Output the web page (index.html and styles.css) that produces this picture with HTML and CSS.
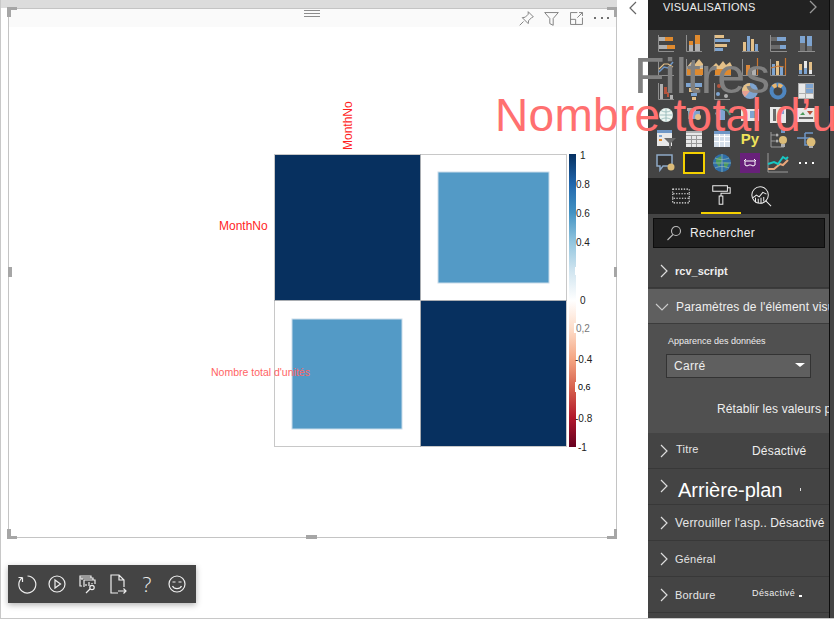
FILE: index.html
```html
<!DOCTYPE html>
<html lang="en">
<head>
    <meta charset="UTF-8">
    <meta name="viewport" content="width=device-width, initial-scale=1.0">
    <title>Rapport</title>
    <link rel="stylesheet" href="styles.css">
</head>
<body>
    <div class="page">
        <div class="report">
            <div class="top-band"></div>
            <div class="visual">
                <i class="grip"><b></b><b></b><b></b></i>
                <i class="corner tl"></i><i class="corner tr"></i><i class="corner bl"></i><i class="corner br"></i>
                <i class="handle left"></i><i class="handle right"></i><i class="handle bottom"></i>
                <div class="visual-header">
                    <svg class="hd-icon" viewBox="0 0 20 20"><path d="M12 2l6 6-2 1-3.500 3.500-.5 3.500-7-7 3.500-.5L12 5zM6.500 13.500L2 18"/></svg>
                    <svg class="hd-icon" viewBox="0 0 20 20"><path d="M2 3h16l-6 7v8l-4-2v-6z"/></svg>
                    <svg class="hd-icon" viewBox="0 0 20 20"><path d="M11 3H3v14h14V9M3 11h6v6M11 9l6-6M13 3h4v4"/></svg>
                    <span class="hd-more"><b></b><b></b><b></b></span>
                </div>
                <svg class="chart" viewBox="9 27 607 510">
                    <defs>
                        <linearGradient id="rdbu" x1="0" y1="0" x2="0" y2="1">
                            <stop offset="0" stop-color="#053061"/>
                            <stop offset="0.1" stop-color="#2166ac"/>
                            <stop offset="0.2" stop-color="#4393c3"/>
                            <stop offset="0.3" stop-color="#92c5de"/>
                            <stop offset="0.4" stop-color="#d1e5f0"/>
                            <stop offset="0.5" stop-color="#ffffff"/>
                            <stop offset="0.6" stop-color="#fddbc7"/>
                            <stop offset="0.7" stop-color="#f4a582"/>
                            <stop offset="0.8" stop-color="#d6604d"/>
                            <stop offset="0.9" stop-color="#b2182b"/>
                            <stop offset="1" stop-color="#67001f"/>
                        </linearGradient>
                    </defs>
                    <rect class="cell-dark" x="274" y="154" width="146.500" height="146.500"/>
                    <rect class="cell-dark" x="420.500" y="300.500" width="146" height="146"/>
                    <rect class="cell-box" x="274.500" y="154.500" width="292" height="292"/>
                    <path class="cell-line" d="M420.500 154v293M274 300.500h293"/>
                    <rect class="cell-mid" x="438" y="172" width="111" height="111"/>
                    <rect class="cell-mid" x="292" y="319" width="110" height="110"/>
                    <text class="lbl-red" transform="translate(352 150) rotate(-90)">MonthNo</text>
                    <text class="lbl-red" x="219" y="230">MonthNo</text>
                    <text class="lbl-pink" x="211" y="376">Nombre total d'unités</text>
                    <rect x="569" y="154" width="7" height="293" fill="url(#rdbu)"/>
                    <text class="tick" x="580" y="159">1</text>
                    <text class="tick" x="576" y="188">0.8</text>
                    <text class="tick" x="576" y="217">0.6</text>
                    <text class="tick" x="576" y="246">0.4</text>
                    <rect class="tick-mask" x="575" y="267" width="4" height="8"/>
                    <text class="tick" x="580" y="304">0</text>
                    <rect class="tick-mask" x="574" y="323" width="14" height="10"/>
                    <text class="tick-faint" x="576" y="332">0,2</text>
                    <text class="tick" x="575" y="363">-0.4</text>
                    <rect class="tick-mask" x="575" y="382" width="14" height="10"/>
                    <text class="tick-small" x="578" y="390">0,6</text>
                    <text class="tick" x="575" y="422">-0.8</text>
                    <text class="tick" x="578" y="451">-1</text>
                </svg>
            </div>
            <div class="toolbar">
                <svg class="tb-icon" viewBox="0 0 24 24"><path d="M7.500 5.500a8.500 8.500 0 1 0 5-1.500M7.500 5.500V10M7.500 5.500H3.500"/></svg>
                <svg class="tb-icon" viewBox="0 0 24 24"><circle cx="12" cy="12" r="8"/><path d="M10 8l5.500 4-5.500 4z"/></svg>
                <svg class="tb-icon" viewBox="0 0 24 24"><path d="M5 6V4h11v2M7 8V6h11v2M5 6h2M7 14H5V6M9 15V8h11v4M11 14v-2M14 14v-4M17 12v-1M15 17l-4 4"/><circle cx="17" cy="15.500" r="2.200"/></svg>
                <svg class="tb-icon" viewBox="0 0 24 24"><path d="M13 21H6V3h8l5 5v7M14 3v5h5M13 19h8M18.500 16.500l2.500 2.500-2.500 2.500"/></svg>
                <span class="tb-help">?</span>
                <svg class="tb-icon" viewBox="0 0 24 24"><circle cx="12" cy="12" r="8"/><path d="M7.500 14c1.500 3.500 7.500 3.500 9 0M7.500 10h3M13.500 10h3"/></svg>
            </div>
        </div>

        <div class="collapse-strip"><svg class="chev-back" viewBox="0 0 10 14"><path d="M8 1L2 7l6 6"/></svg></div>

        <div class="pane">
            <div class="pane-inner">
                <div class="pane-title">
                    <span>VISUALISATIONS</span>
                    <svg class="chev-title" viewBox="0 0 10 14"><path d="M2 1l6 6-6 6"/></svg>
                </div>
                <div class="viz-grid">
                    <svg viewBox="0 0 24 24"><path class="ax" d="M4.500 4v16.500H20"/><rect class="g" x="5" y="6" width="6" height="4"/><rect class="o" x="11" y="6" width="8" height="4"/><rect class="g" x="5" y="14" width="8" height="4"/><rect class="o" x="13" y="14" width="8" height="4"/></svg>
                    <svg viewBox="0 0 24 24"><path class="ax" d="M4.500 4v16.500H20"/><rect class="o" x="7" y="10" width="4" height="4"/><rect class="g" x="7" y="14" width="4" height="6"/><rect class="o" x="13" y="4" width="5" height="9"/><rect class="g" x="13" y="13" width="5" height="7"/></svg>
                    <svg viewBox="0 0 24 24"><path class="ax" d="M4.500 4v16.500"/><rect class="t" x="5" y="4" width="9" height="3"/><rect class="b" x="5" y="8" width="15" height="3"/><rect class="t" x="5" y="13" width="12" height="3"/><rect class="b" x="5" y="17" width="8" height="3"/></svg>
                    <svg viewBox="0 0 24 24"><path class="ax" d="M4 20.500h17"/><rect class="t" x="5" y="11" width="3" height="9"/><rect class="b" x="9" y="5" width="3" height="15"/><rect class="t" x="13" y="8" width="3" height="12"/><rect class="b" x="17" y="13" width="3" height="7"/></svg>
                    <svg viewBox="0 0 24 24"><path class="ax" d="M4.500 4v16.500H21"/><rect class="d" x="5" y="6" width="6" height="4"/><rect class="b" x="11" y="6" width="9" height="4"/><rect class="d" x="5" y="14" width="9" height="4"/><rect class="b" x="14" y="14" width="6" height="4"/></svg>
                    <svg viewBox="0 0 24 24"><path class="ax" d="M4 20.500h17"/><rect class="b" x="6" y="5" width="5" height="7"/><rect class="d" x="6" y="12" width="5" height="8"/><rect class="b" x="13" y="5" width="5" height="10"/><rect class="d" x="13" y="15" width="5" height="5"/></svg>

                    <svg viewBox="0 0 24 24"><path class="ax" d="M4.500 4v16.500H20"/><path class="ln-b" d="M5 17l5-5 4 1 5-6"/><path class="ln-t" d="M5 14l5-5 4 0 5 3"/></svg>
                    <svg viewBox="0 0 24 24"><path class="ax" d="M4.500 4v16.500H20"/><rect class="o" x="5" y="12" width="16" height="8"/><path class="t" d="M5 12l4-5 4 2 4-5 4 5v5H5z"/><path class="g" d="M5 12l4-3 5 3 7-2v3H5z"/></svg>
                    <svg viewBox="0 0 24 24"><path class="ax" d="M4.500 20.500H21"/><rect class="o" x="5" y="13" width="16" height="7"/><path class="t" d="M2 12l4-4 3 3 4-5 3 4 4-3 2 4v3H2z"/></svg>
                    <svg viewBox="0 0 24 24"><path class="ax" d="M4.500 4v16.500H20"/><rect class="o2" x="8" y="10" width="4" height="10"/><rect class="g" x="14" y="13" width="4" height="7"/><path class="ln-o" d="M19.500 3v17"/></svg>
                    <svg viewBox="0 0 24 24"><path class="ax" d="M4.500 4v16.500H20"/><rect class="b" x="6" y="9" width="3" height="11"/><rect class="t" x="10" y="6" width="3" height="14"/><rect class="b" x="14" y="11" width="3" height="9"/><path class="ln-o" d="M5 13l7-2 6 1M19.500 3v17"/></svg>
                    <svg viewBox="0 0 24 24"><path class="ax" d="M4 20.500h17"/><rect class="t" x="5" y="9" width="3" height="6"/><rect class="b" x="5" y="15" width="3" height="4"/><rect class="w" x="10" y="6" width="3" height="7"/><rect class="b" x="10" y="13" width="3" height="6"/><rect class="t" x="15" y="7" width="3" height="8"/><rect class="w" x="15" y="15" width="3" height="4"/></svg>

                    <svg viewBox="0 0 24 24"><path class="ax" d="M4.500 4v16.500H20"/><rect class="g" x="6" y="5" width="3" height="15"/><rect class="r" x="10" y="8" width="3" height="7"/><rect class="r" x="13" y="13" width="2" height="5"/><rect class="g" x="16" y="16" width="3" height="4"/></svg>
                    <svg viewBox="0 0 24 24"><rect class="b" x="4" y="4" width="16" height="4"/><rect class="t" x="7" y="9" width="10" height="4"/><rect class="b" x="9" y="14" width="6" height="3"/><rect class="t" x="10" y="18" width="4" height="3"/></svg>
                    <svg viewBox="0 0 24 24"><path class="ax" d="M4.500 4v16.500H20"/><circle class="r" cx="9" cy="7" r="2"/><circle class="t" cx="15" cy="10" r="1.500"/><circle class="b" cx="8" cy="15" r="2"/><circle class="g" cx="16" cy="17" r="2"/></svg>
                    <svg viewBox="0 0 24 24"><circle class="b" cx="12" cy="12" r="8"/><path class="t" d="M12 12V4a8 8 0 0 0-8 8z"/><path class="p" d="M12 12H4a8 8 0 0 0 3 6z"/></svg>
                    <svg viewBox="0 0 24 24"><circle class="ring-b" cx="12" cy="12" r="6.500"/><path class="ring-t" d="M7 8a6.500 6.500 0 0 1 9 0"/></svg>
                    <svg viewBox="0 0 24 24"><rect class="g" x="4" y="4" width="16" height="16"/><rect class="w" x="5" y="5" width="6" height="9"/><rect class="b" x="12" y="5" width="7" height="4"/><rect class="b" x="12" y="10" width="7" height="4"/><rect class="w" x="5" y="15" width="6" height="4"/><rect class="w" x="12" y="15" width="7" height="4"/></svg>

                    <svg viewBox="0 0 24 24"><circle class="globe-w" cx="12" cy="12" r="7"/><path class="globe-l" d="M5 12h14M12 5v14M7 7.500c3 2 7 2 10 0M7 16.500c3-2 7-2 10 0"/></svg>
                    <svg viewBox="0 0 24 24"><path class="g" d="M5 5h9v3H5z"/><path class="b" d="M6 8h12v8H6z"/><circle class="t" cx="16" cy="14" r="3"/></svg>
                    <svg viewBox="0 0 24 24"><path class="b" d="M5 10l6-4 4 2v9H8z"/><path class="ln-gr" d="M12 6c4 0 7 2 8 6"/></svg>
                    <svg viewBox="0 0 24 24"><rect class="w" x="3" y="6" width="18" height="12"/><rect class="b" x="12" y="8" width="5" height="7"/></svg>
                    <svg viewBox="0 0 24 24"><rect class="w" x="4" y="4" width="16" height="16"/><rect class="d" x="7" y="6" width="3" height="12"/><rect class="b" x="13" y="6" width="5" height="5"/></svg>
                    <svg viewBox="0 0 24 24"><rect class="w" x="3" y="5" width="18" height="14"/><path class="r" d="M13 8h6l-3 4z"/><path class="gr" d="M6 12l3-3 2 3z"/><rect class="d" x="5" y="14" width="14" height="2"/></svg>

                    <svg viewBox="0 0 24 24"><rect class="w" x="3" y="3" width="15" height="16"/><rect class="hd-b" x="3" y="3" width="15" height="3"/><rect class="b" x="5" y="8" width="3" height="2"/><rect class="o" x="5" y="12" width="3" height="2"/><path class="d" d="M10 11h12l-5 5v6l-2-1v-5z"/></svg>
                    <svg viewBox="0 0 24 24"><rect class="w" x="4" y="4" width="16" height="16"/><path class="grid-l" d="M4 8.500h16M4 12.500h16M4 16.500h16M9.500 8v12M14.500 8v12"/><rect class="g" x="4" y="4" width="16" height="2"/></svg>
                    <svg viewBox="0 0 24 24"><rect class="mx" x="4" y="4" width="16" height="16"/><rect class="hd-b" x="4" y="4" width="16" height="3"/><path class="grid-w" d="M4 9.500h16M4 14.500h16M9.500 7v13M14.500 7v13"/></svg>
                    <span class="py-icon">Py</span>
                    <svg viewBox="0 0 24 24"><path class="ln-g" d="M5 5v15h13M5 8h4M5 14h4"/><circle class="g" cx="11" cy="8" r="1.500"/><circle class="g" cx="11" cy="14" r="1.500"/><rect class="hd-b" x="15" y="3" width="4" height="3"/><circle class="bulb" cx="17" cy="13" r="4"/><rect class="g" x="15" y="17" width="4" height="3"/></svg>
                    <svg viewBox="0 0 24 24"><path class="ln-b" d="M3 11h8M11 6h8M11 11h5M11 6v12h3"/><circle class="bulb" cx="17" cy="15" r="4.500"/><rect class="g" x="15" y="19" width="4" height="2"/></svg>

                    <svg viewBox="0 0 24 24"><path class="bubble" d="M3 4h15v11H9l-3 4v-4H3z"/><circle class="bulb" cx="17" cy="16" r="3.500"/></svg>
                    <span class="viz-selected"></span>
                    <svg viewBox="0 0 24 24"><circle class="b2" cx="12" cy="12" r="9"/><path class="gr" d="M6 8l5-3 1 5-3 6-3-4zM14 11l5 1-3 6-2-3z"/><path class="globe-l" d="M3 12h18M12 3v18M5 7c4 2 10 2 14 0M5 17c4-2 10-2 14 0"/></svg>
                    <svg viewBox="0 0 24 24"><rect class="purple" x="2" y="2" width="20" height="20"/><path class="ln-w" d="M7 10h10v4l-2 1-2-1h-2l-2 1-2-1zM6 10l2-2M18 10l-2-2"/></svg>
                    <svg viewBox="0 0 24 24"><path class="ln-g" d="M2 2v19h20"/><path class="ln-o2" d="M2 18h6l6-5 3 1 5-5"/><path class="ln-c" d="M2 13l6-2 4 2 5-7 3 2 2-2"/></svg>
                    <span class="viz-more"><b></b><b></b><b></b></span>
                </div>
                <div class="pane-tabs">
                    <span class="tab"><svg viewBox="0 0 24 24"><path class="tab-dash" d="M4.500 5.500h18v5h-18zM4.500 10.500v5h18v-5M4.500 15.500v5h18v-5" transform="translate(-1.500 -1)"/></svg></span>
                    <span class="tab active"><svg viewBox="0 0 24 24"><path class="tab-ln" d="M3 2h16v6H3zM19 4h3v6h-10v3M10 13h4v9h-4z"/></svg></span>
                    <span class="tab"><svg viewBox="0 0 24 24"><circle class="tab-ln" cx="11" cy="11" r="9"/><path class="tab-ln" d="M17 17l6 6M3 14l4-3 3 2 4-5 4 2M6 14v5M9 15v5M12 14v6M15 13v5"/></svg></span>
                </div>
                <div class="search">
                    <svg class="search-ico" viewBox="0 0 16 16"><circle cx="10" cy="6" r="4.500"/><path d="M7 9.500L1.500 15"/></svg>
                    <span>Rechercher</span>
                </div>
                <div class="row row-script">
                    <svg class="chev" viewBox="0 0 10 14"><path d="M2 1l6 6-6 6"/></svg>
                    <span class="script-name">rcv_script</span>
                </div>
                <div class="row row-open">
                    <svg class="chev-down" viewBox="0 0 14 10"><path d="M1 2l6 6 6-6"/></svg>
                    <span>Paramètres de l'élément visuel</span>
                </div>
                <div class="section">
                    <div class="field-label">Apparence des données</div>
                    <div class="select"><span>Carré</span><i class="caret"></i></div>
                    <div class="reset">Rétablir les valeurs par défaut</div>
                </div>
                <div class="row">
                    <svg class="chev" viewBox="0 0 10 14"><path d="M2 1l6 6-6 6"/></svg>
                    <span class="row-label title-label">Titre</span>
                    <span class="row-state state-title">Désactivé</span>
                </div>
                <div class="row row-big">
                    <svg class="chev" viewBox="0 0 10 14"><path d="M2 1l6 6-6 6"/></svg>
                    <span class="big-label">Arrière-plan</span>
                    <i class="speck"></i>
                </div>
                <div class="row">
                    <svg class="chev" viewBox="0 0 10 14"><path d="M2 1l6 6-6 6"/></svg>
                    <span class="row-label">Verrouiller l'asp..</span>
                    <span class="row-state state-lock">Désactivé</span>
                </div>
                <div class="row">
                    <svg class="chev" viewBox="0 0 10 14"><path d="M2 1l6 6-6 6"/></svg>
                    <span class="row-label small">Général</span>
                </div>
                <div class="row">
                    <svg class="chev" viewBox="0 0 10 14"><path d="M2 1l6 6-6 6"/></svg>
                    <span class="row-label small">Bordure</span>
                    <span class="row-state state-border">Désactivé</span>
                    <i class="dot"></i>
                </div>
            </div>
        </div>
    </div>
    <div class="page-line"></div>

    <div class="ghost-filters">Filtres</div>
    <div class="ghost-total">Nombre total d’u</div>
</body>
</html>
```

FILE: styles.css
```css
html, body {
    margin: 0;
    height: 619px;
    overflow: hidden;
    background-color: #fff;
    font-family: "Liberation Sans", Arial, sans-serif;
}
.page {
    display: flex;
    height: 618px;
}
.page-line {
    height: 1px;
    background-color: #c8c8c8;
}

/* report canvas */
.report {
    width: 616px;
    flex: none;
    border-left: 1px solid #c8c8c8;
}
.top-band {
    height: 8px;
    background-color: #dcdcdc;
}
.visual {
    position: relative;
    margin-left: 7px;
    width: 607px;
    height: 528px;
    border: 1px solid #c4c4c4;
    background-color: #fff;
}
.visual-header {
    height: 18px;
    background-color: #fafafa;
    display: flex;
    justify-content: flex-end;
    align-items: center;
    gap: 8px;
    padding-right: 7px;
    box-sizing: border-box;
}
.hd-icon {
    width: 17px;
    height: 17px;
    fill: none;
    stroke: #7c7c7c;
    stroke-width: 1.100;
}
.hd-more {
    width: 15px;
    margin-left: 1px;
    display: flex;
    justify-content: space-between;
}
.hd-more b {
    width: 2px;
    height: 2px;
    background-color: #707070;
}
.chart {
    display: block;
    width: 607px;
    height: 510px;
}
.grip {
    position: absolute;
    left: 295px;
    top: 0;
    width: 16px;
    display: flex;
    flex-direction: column;
    gap: 2px;
    padding-top: 1px;
}
.grip b {
    height: 1px;
    background-color: #8c8c8c;
}
.corner {
    position: absolute;
    width: 10px;
    height: 10px;
    box-sizing: border-box;
    z-index: 2;
}
.corner.tl { left: -2px; top: -2px; border-left: 4px solid #a6a6a6; border-top: 3px solid #a6a6a6; }
.corner.tr { right: -1px; top: -2px; border-right: 3px solid #a6a6a6; border-top: 3px solid #a6a6a6; }
.corner.bl { left: -2px; bottom: -2px; border-left: 4px solid #a6a6a6; border-bottom: 3px solid #a6a6a6; }
.corner.br { right: -1px; bottom: -2px; border-right: 3px solid #a6a6a6; border-bottom: 3px solid #a6a6a6; }
.handle {
    position: absolute;
    background-color: #a6a6a6;
}
.handle.left { left: -1px; top: 258px; width: 4px; height: 10px; }
.handle.right { right: -1px; top: 258px; width: 3px; height: 10px; }
.handle.bottom { left: 297px; bottom: -2px; width: 11px; height: 4px; }

/* chart */
.cell-box { fill: none; stroke: #c8c8c8; }
.cell-dark { fill: #07305f; }
.cell-line { stroke: #a9adb2; fill: none; }
.cell-mid { fill: #539ac6; stroke: #c9dcea; stroke-width: 1; }
.lbl-red {
    fill: #ff1f1f;
    font-size: 12px;
}
.lbl-pink {
    fill: #ff6464;
    font-size: 10.500px;
}
.tick {
    fill: #222;
    font-size: 10px;
}
.tick-faint {
    fill: #777;
    font-size: 10px;
}
.tick-small {
    fill: #000;
    font-size: 9px;
}
.tick-mask { fill: #fff; }

/* bottom toolbar */
.toolbar {
    display: flex;
    align-items: center;
    justify-content: space-between;
    width: 188px;
    height: 38px;
    margin: 27px 0 0 7px;
    padding: 0 7px;
    box-sizing: border-box;
    background-color: #444;
    box-shadow: 0 2px 6px rgba(0, 0, 0, 0.3);
}
.tb-icon {
    width: 24px;
    height: 24px;
    fill: none;
    stroke: #eee;
    stroke-width: 1.200;
}
.tb-help {
    width: 24px;
    color: #eee;
    font-family: "Open Sans", sans-serif;
    font-size: 21px;
    font-weight: 300;
    line-height: 24px;
    text-align: center;
}

.collapse-strip {
    width: 31px;
    flex: none;
    display: flex;
    justify-content: center;
    align-items: flex-start;
    padding-top: 1px;
}
.chev-back {
    width: 10px;
    height: 14px;
    fill: none;
    stroke: #666;
    stroke-width: 1.200;
}

/* right pane */
.pane {
    width: 186px;
    flex: none;
    background-color: #444;
}
.pane-inner {
    width: 181px;
    height: 100%;
    overflow: hidden;
    border-right: 1px solid #0d0d0d;
    color: #fff;
}
.pane-title {
    height: 30px;
    background-color: #222;
    padding-left: 15px;
    display: flex;
    align-items: flex-start;
    font-size: 11px;
    line-height: 15px;
    color: #eee;
    letter-spacing: 0.2px;
}
.chev-title {
    width: 10px;
    height: 14px;
    margin-left: 53px;
    fill: none;
    stroke: #999;
    stroke-width: 1.300;
}
.viz-grid {
    height: 148px;
    box-sizing: border-box;
    padding: 1px 0 0 4px;
    display: grid;
    grid-template-columns: repeat(6, 28px);
    grid-auto-rows: 24px;
    background-color: #444;
}
.viz-grid svg {
    width: 24px;
    height: 24px;
    justify-self: center;
}
.o { fill: #e08a2e; }
.o2 { fill: #d8863a; }
.g { fill: #b0b0b0; }
.d { fill: #6a6a6a; }
.b { fill: #7ea4d0; }
.b2 { fill: #2f6fa8; }
.t { fill: #e4c088; }
.w { fill: #e8e8e8; }
.r { fill: #b5533c; }
.p { fill: #e8a090; }
.gr { fill: #4c9a5a; }
.bulb { fill: #dcbc78; }
.purple { fill: #68217a; }
.hd-b { fill: #6f97c6; }
.mx { fill: #d5dfea; }
.ax { fill: none; stroke: #8f8f8f; }
.ln-b { fill: none; stroke: #6f97c6; stroke-width: 1.500; }
.ln-t { fill: none; stroke: #e4c088; stroke-width: 1.200; }
.ln-o { fill: none; stroke: #c9752f; stroke-width: 1.200; }
.ln-g { fill: none; stroke: #9a9a9a; }
.ln-gr { fill: none; stroke: #4c9a7a; stroke-width: 2; }
.ln-w { fill: none; stroke: #fff; }
.ln-o2 { fill: none; stroke: #e9a77a; stroke-width: 2; }
.ln-c { fill: none; stroke: #18c8c4; stroke-width: 2; }
.ring-b { fill: none; stroke: #4f86c0; stroke-width: 4; }
.ring-t { fill: none; stroke: #e9b56e; stroke-width: 4; stroke-dasharray: 4 1.500; }
.globe-w { fill: #eef6f2; }
.globe-l { fill: none; stroke: #8fb5b5; stroke-width: 0.800; }
.grid-l { fill: none; stroke: #999; }
.grid-w { fill: none; stroke: #fff; }
.bubble { fill: #333; stroke: #8fa9c6; stroke-width: 1.500; }
.py-icon {
    justify-self: center;
    align-self: center;
    color: #efe35a;
    font-size: 15px;
    font-weight: bold;
    line-height: 24px;
}
.viz-selected {
    justify-self: center;
    align-self: center;
    width: 22px;
    height: 22px;
    box-sizing: border-box;
    background-color: #222;
    border: 2px solid #f4d000;
}
.viz-more {
    justify-self: center;
    align-self: center;
    width: 15px;
    display: flex;
    justify-content: space-between;
}
.viz-more b {
    width: 2px;
    height: 2px;
    background-color: #fff;
}
.pane-tabs {
    height: 36px;
    box-sizing: border-box;
    background-color: #222;
    display: flex;
    padding-left: 13px;
}
.tab {
    width: 40px;
    height: 36px;
    box-sizing: border-box;
    display: flex;
    align-items: center;
    justify-content: center;
}
.tab.active { border-bottom: 2px solid #f4d000; }
.tab svg { width: 22px; height: 22px; }
.tab-ln { fill: none; stroke: #eee; stroke-width: 1.100; }
.tab-dash { fill: none; stroke: #eee; stroke-width: 1.100; stroke-dasharray: 1.500 1.500; }
.search {
    display: flex;
    align-items: center;
    gap: 8px;
    height: 30px;
    margin: 4px 4px 0 5px;
    padding-left: 12px;
    box-sizing: border-box;
    background-color: #1f1f1f;
    border: 1px solid #0d0d0d;
    font-size: 12px;
    letter-spacing: 0.3px;
    color: #eee;
}
.search-ico {
    width: 16px;
    height: 16px;
    fill: none;
    stroke: #bbb;
    stroke-width: 1.100;
}
.row {
    display: flex;
    align-items: center;
    height: 36px;
    box-sizing: border-box;
    padding-left: 11px;
    background-color: #444;
    border-bottom: 1px solid #383838;
    position: relative;
    white-space: nowrap;
}
.row-script {
    height: 40px;
    padding-top: 7px;
}
.script-name {
    margin-left: 6px;
    font-size: 11px;
    font-weight: bold;
    color: #eee;
}
.row-open {
    padding-left: 7px;
    padding-top: 1px;
    background-color: #5f5f5f;
    border-top: 1px solid #3c3c3c;
    border-bottom: 1px solid #3c3c3c;
    font-size: 12px;
    letter-spacing: 0.15px;
    color: #f0f0f0;
}
.row-open span { margin-left: 7px; }
.chev {
    width: 10px;
    height: 14px;
    flex: none;
    fill: none;
    stroke: #ddd;
    stroke-width: 1.200;
}
.chev-down {
    width: 14px;
    height: 10px;
    flex: none;
    fill: none;
    stroke: #ccc;
    stroke-width: 1.100;
}
.section {
    height: 109px;
    box-sizing: border-box;
    background-color: #505050;
    padding: 11px 0 0 20px;
    white-space: nowrap;
}
.field-label {
    font-size: 9px;
    line-height: 12px;
    color: #eee;
}
.select {
    display: flex;
    align-items: center;
    justify-content: space-between;
    width: 145px;
    height: 24px;
    margin: 7px 0 0 -2px;
    padding: 0 5px 0 7px;
    box-sizing: border-box;
    background-color: #5f5f5f;
    border: 1px solid #333;
    font-size: 12px;
    letter-spacing: 0.3px;
    color: #eee;
}
.caret {
    width: 0;
    height: 0;
    border-left: 5px solid transparent;
    border-right: 5px solid transparent;
    border-top: 4px solid #fff;
    margin-bottom: 2px;
}
.reset {
    margin: 24px 0 0 49px;
    font-size: 12px;
    line-height: 15px;
    letter-spacing: 0.1px;
    color: #eee;
}
.row-label {
    margin-left: 6px;
    font-size: 12px;
    letter-spacing: 0.2px;
    color: #e6e6e6;
}
.row-label.small { font-size: 11px; }
.title-label {
    font-size: 11px;
    margin-top: -4px;
    margin-left: 7px;
}
.row-state {
    font-size: 12px;
    letter-spacing: 0.2px;
    color: #eee;
}
.state-title { position: absolute; left: 104px; top: 11px; }
.state-lock { margin-left: 3px; }
.state-border { position: absolute; left: 104px; top: 11px; font-size: 9px; letter-spacing: 0.4px; }
.dot {
    position: absolute;
    left: 151px;
    top: 18px;
    width: 3px;
    height: 2px;
    background-color: #fff;
}
.row-big .chev { margin-top: -2px; }
.big-label {
    margin: 8px 0 0 9px;
    font-size: 20px;
    color: #fff;
}
.speck {
    position: absolute;
    left: 152px;
    top: 19px;
    width: 1px;
    height: 3px;
    background-color: #ddd;
}

/* stray titles drawn over the pane */
.ghost-filters {
    position: absolute;
    left: 634px;
    top: 46px;
    font-size: 50px;
    line-height: 60px;
    color: #808080;
    white-space: nowrap;
}
.ghost-total {
    position: absolute;
    left: 495px;
    top: 88px;
    font-size: 46px;
    line-height: 54px;
    letter-spacing: 0.3px;
    color: #ff7070;
    white-space: nowrap;
}
```
